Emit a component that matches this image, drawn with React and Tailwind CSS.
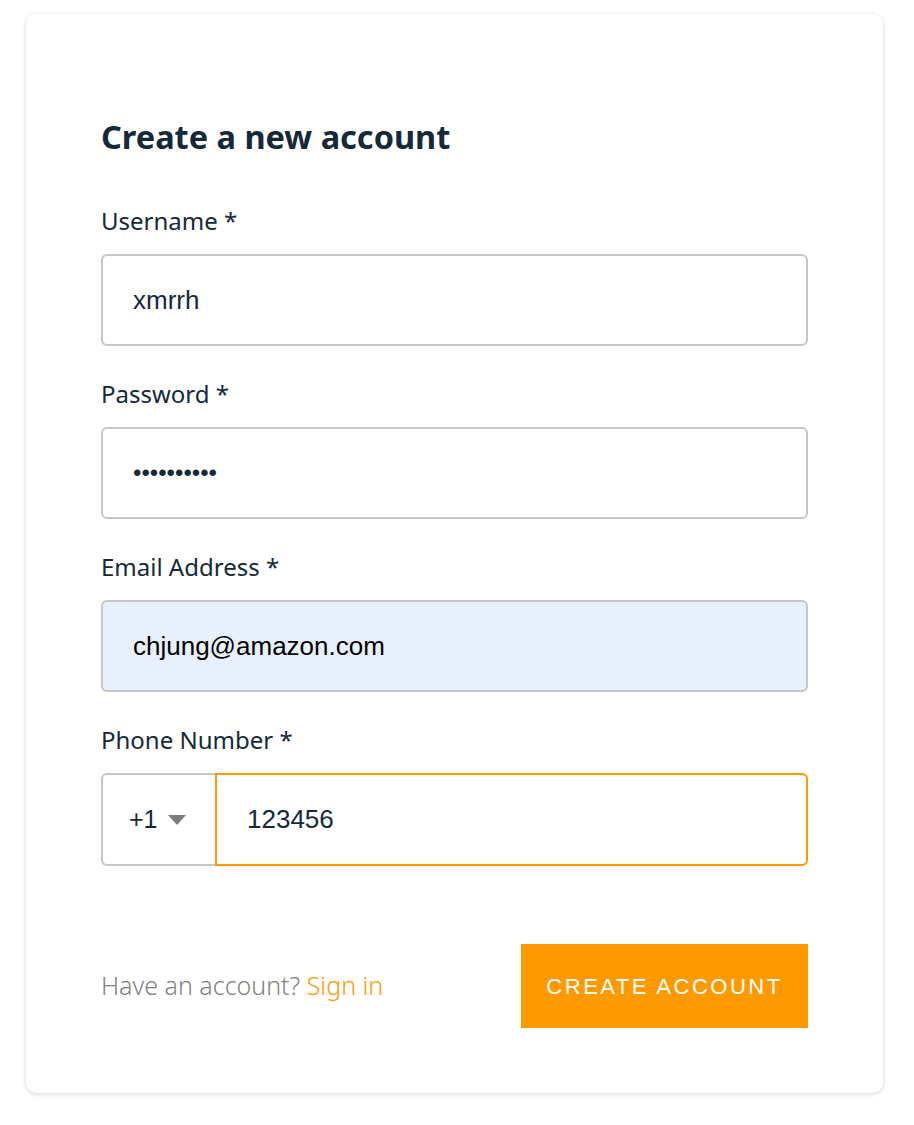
export default function App() {
  return (
    <div className="min-h-screen bg-white pt-[14px] pl-[26px]">
      <div className="w-[857px] rounded-[10px] bg-white px-[75px] pt-[103px] pb-[65px] shadow-[0_1px_4px_rgba(0,0,0,0.18)] font-['Noto_Sans',sans-serif]">
        <h1 className="h-[40px] text-[32.5px] leading-[40px] font-bold text-[#152939]">
          Create a new account
        </h1>

        <div className="mt-[47px]">
          <Field label="Username *">
            <input
              readOnly
              value="xmrrh"
              className="h-[92px] w-full rounded-[6px] border-2 border-[#c6c6c6] bg-white px-[30px] text-[26px] text-[#152939] outline-none font-['Liberation_Sans',Arial,sans-serif]"
            />
          </Field>

          <Field label="Password *">
            <input
              readOnly
              type="password"
              value="abcdefghij"
              className="h-[92px] w-full rounded-[6px] border-2 border-[#c6c6c6] bg-white px-[30px] text-[24px] text-[#152939] outline-none font-['Liberation_Sans',Arial,sans-serif]"
            />
          </Field>

          <Field label="Email Address *">
            <input
              readOnly
              value="chjung@amazon.com"
              className="h-[92px] w-full rounded-[6px] border-2 border-[#c6c6c6] bg-[#e8f0fe] px-[30px] text-[26px] text-black outline-none font-['Liberation_Sans',Arial,sans-serif]"
            />
          </Field>

          <Field label="Phone Number *" last>
            <div className="flex h-[93px]">
              <div className="flex w-[114px] shrink-0 items-center gap-[10px] rounded-l-[6px] border-2 border-r-0 border-[#c6c6c6] pl-[26px] text-[25px] text-[#152939] font-['Liberation_Sans',Arial,sans-serif]">
                <span>+1</span>
                <svg width="18" height="10" viewBox="0 0 18 10">
                  <path d="M0 0 L18 0 L9 10 Z" fill="#7b7b7b" />
                </svg>
              </div>
              <input
                readOnly
                value="123456"
                className="h-full min-w-0 flex-1 rounded-r-[6px] border-2 border-[#ff9900] bg-white px-[30px] text-[26px] text-[#152939] outline-none font-['Liberation_Sans',Arial,sans-serif]"
              />
            </div>
          </Field>
        </div>

        <div className="mt-[78px] flex items-center justify-between">
          <p className="text-[25px] font-light text-[#828282]">
            Have an account? <a className="text-[#ff9900]">Sign in</a>
          </p>
          <button className="h-[84px] w-[287px] bg-[#ff9900] text-[22px] tracking-[2.5px] text-white font-['Liberation_Sans',Arial,sans-serif]">
            CREATE ACCOUNT
          </button>
        </div>
      </div>
    </div>
  );
}

function Field({ label, children, last }) {
  return (
    <div className={last ? "" : "mb-[31px]"}>
      <label className="mb-[16px] block h-[34px] text-[24px] leading-[34px] text-[#152939]">
        {label}
      </label>
      {children}
    </div>
  );
}
